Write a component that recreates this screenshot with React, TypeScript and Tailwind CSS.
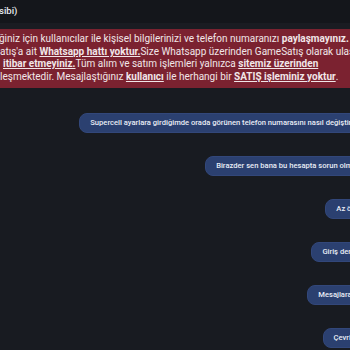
import type { ReactNode } from 'react';

const messages = [
    'Supercell ayarlara girdiğimde orada görünen telefon numarasını nasıl değiştirebilirim acaba',
    'Birazder sen bana bu hesapta sorun olmayacak dedin.',
    'Az önce girdim ya.',
    'Giriş denedim olmuyor',
    'Mesajlara bakar mısınız',
    'Çevrimiçi misiniz??',
];

function B({ children }: { children: ReactNode }) {
    return <span className="font-bold underline underline-offset-1">{children}</span>;
}

export default function App() {
    return (
        <div className="h-[350px] w-[350px] overflow-hidden bg-[#181b21] font-['Roboto',sans-serif] text-white">
            {/* üst başlık */}
            <div className="flex h-[23px] items-center bg-[#14161b] text-[9.5px] font-medium text-[#e6e8ee]">
                <span className="-ml-px">sibi)</span>
            </div>
            <div className="h-[6px] bg-[#1a1c22]" />

            {/* uyarı bandı */}
            <div className="overflow-hidden whitespace-nowrap bg-[#7b2230] py-[4px] text-[10px] leading-[12.7px] text-[#f1e6e8]">
                <div className="-ml-px">
                    ğiniz için kullanıcılar ile kişisel bilgilerinizi ve telefon numaranızı <span className="font-bold">paylaşmayınız.</span> GameSatış
                </div>
                <div>
                    atış'a ait <B>Whatsapp hattı yoktur.</B>Size Whatsapp üzerinden GameSatış olarak ulaşanlara
                </div>
                <div className="ml-[3px]">
                    <B>itibar etmeyiniz.</B>Tüm alım ve satım işlemleri yalnızca <B>sitemiz üzerinden</B>
                </div>
                <div>
                    leşmektedir. Mesajlaştığınız <B>kullanıcı</B> ile herhangi bir <B>SATIŞ işleminiz yoktur</B>.
                </div>
            </div>

            {/* mesajlar */}
            <div className="mr-[-60px] flex flex-col items-end gap-[23px] pt-[25px]">
                {messages.map((m) => (
                    <div
                        key={m}
                        className="flex h-[20px] items-center whitespace-nowrap rounded-[8px] border border-[#32477a] bg-[#2b4070] px-[10px] text-[7.6px] font-medium text-[#e9edf6]"
                    >
                        {m}
                    </div>
                ))}
            </div>
        </div>
    );
}
